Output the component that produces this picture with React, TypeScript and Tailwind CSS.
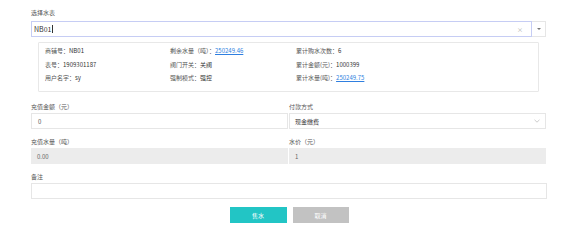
import React from 'react';

const font = "font-['Noto_Sans_CJK_SC','Noto_Sans',sans-serif]";

function Label({ text }: { text: string }) {
  return <div className="h-[10px] leading-[10px] text-[6px] text-[#555] mb-[1px]">{text}</div>;
}

function InfoItem({ label, value, link }: { label: string; value: string; link?: boolean }) {
  return (
    <div className="h-[13.5px] leading-[13.5px] text-[6px] text-[#555] whitespace-nowrap">
      {label}
      {link ? (
        <span className="text-[#2f7fe0] underline">{value}</span>
      ) : (
        <span className="text-[#333]">{value}</span>
      )}
    </div>
  );
}

export default function App() {
  return (
    <div className={`w-[578px] h-[246px] bg-white px-[31px] pt-[8px] ${font}`}>
      <div className="h-[10px] leading-[10px] text-[6px] text-[#555] mb-[3px]">选择水表</div>
      <div className="flex h-[16px] w-[515px]">
        <div className="flex-1 flex items-center border border-[#c6cdf4] pl-[2px] pr-[8px]">
          <span className="text-[7px] text-[#333]">NB01</span>
          <span className="w-[0.5px] h-[8px] bg-[#333] ml-[0.5px]" />
          <span className="ml-auto text-[6px] text-[#aaa]">×</span>
        </div>
        <div className="w-[14px] flex items-center justify-center border border-l-0 border-[#e6e6e6]">
          <div className="w-0 h-0 border-l-[2px] border-r-[2px] border-t-[2px] border-l-transparent border-r-transparent border-t-[#777]" />
        </div>
      </div>

      <div className="mt-[5px] ml-[7px] mr-[8px] h-[50px] border border-[#e8e8e8] rounded-[1px] px-[6px] pt-[1px] grid grid-cols-[125px_126px_1fr]">
        <div>
          <InfoItem label="商铺号：" value="NB01" />
          <InfoItem label="表号：" value="1909301187" />
          <InfoItem label="用户名字：" value="sy" />
        </div>
        <div>
          <InfoItem label="剩余水量（吨）：" value="250249.46" link />
          <InfoItem label="阀门开关：" value="关阀" />
          <InfoItem label="强制模式：" value="强控" />
        </div>
        <div>
          <InfoItem label="累计购水次数：" value="6" />
          <InfoItem label="累计金额(元)：" value="1000399" />
          <InfoItem label="累计水量(吨)：" value="250249.75" link />
        </div>
      </div>

      <div className="mt-[10px] grid grid-cols-2 gap-x-[1px] gap-y-[8px] w-[515px]">
        <div>
          <Label text="充值金额（元）" />
          <div className="h-[16px] border border-[#e6e6e6] flex items-center pl-[6px] text-[6px] text-[#555]">0</div>
        </div>
        <div>
          <Label text="付款方式" />
          <div className="h-[16px] border border-[#e6e6e6] flex items-center pl-[5px] pr-[5px] text-[6px] text-[#333]">
            现金缴费
            <svg className="ml-auto" width="6" height="4" viewBox="0 0 6 4">
              <path d="M0.5 0.8 L3 3.2 L5.5 0.8" fill="none" stroke="#aaa" strokeWidth="0.6" />
            </svg>
          </div>
        </div>
        <div>
          <Label text="充值水量（吨）" />
          <div className="h-[16px] bg-[#ececec] flex items-center pl-[6px] text-[6px] text-[#666]">0.00</div>
        </div>
        <div>
          <Label text="水价（元）" />
          <div className="h-[16px] bg-[#ececec] flex items-center pl-[6px] text-[6px] text-[#666]">1</div>
        </div>
      </div>

      <div className="mt-[8px] w-[516px]">
        <Label text="备注" />
        <div className="h-[16px] border border-[#e6e6e6]" />
      </div>

      <div className="mt-[8px] flex justify-center gap-[6px] w-[516px]">
        <button className="w-[57px] h-[16px] bg-[#22c5c5] text-white text-[6px]">售水</button>
        <button className="w-[56px] h-[16px] bg-[#c2c2c2] text-white text-[6px]">取消</button>
      </div>
    </div>
  );
}
